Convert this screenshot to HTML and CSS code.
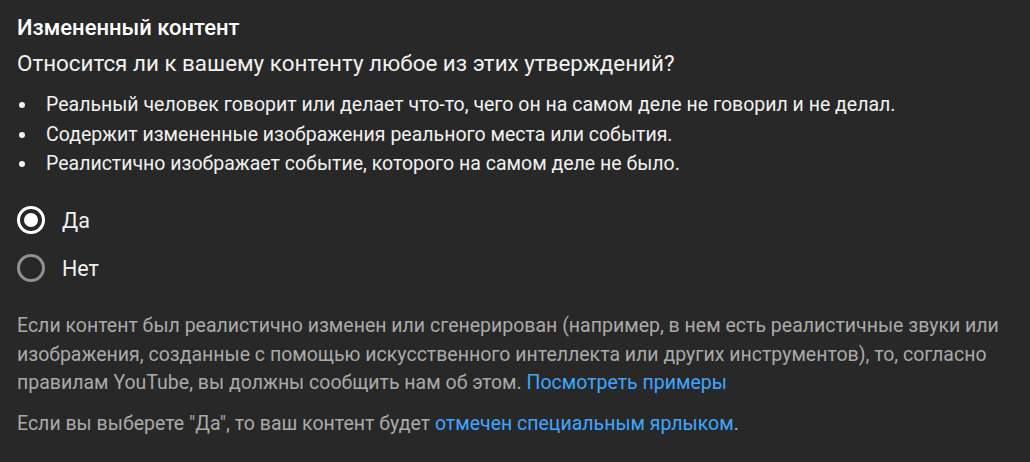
FILE: index.html
```html
<!DOCTYPE html>
<html lang="ru">
<head>
<meta charset="utf-8">
<link rel="stylesheet" href="styles.css">
</head>
<body>
<div class="panel">
  <h2 class="title">Измененный контент</h2>
  <p class="question">Относится ли к вашему контенту любое из этих утверждений?</p>
  <ul class="list">
    <li>Реальный человек говорит или делает что-то, чего он на самом деле не говорил и не делал.</li>
    <li>Содержит измененные изображения реального места или события.</li>
    <li>Реалистично изображает событие, которого на самом деле не было.</li>
  </ul>
  <div class="radios">
    <label class="radio checked"><span class="circle"><span class="dot"></span></span><span class="rlabel">Да</span></label>
    <label class="radio"><span class="circle"></span><span class="rlabel">Нет</span></label>
  </div>
  <p class="note">Если контент был реалистично изменен или сгенерирован (например, в нем есть реалистичные звуки или изображения, созданные с помощью искусственного интеллекта или других инструментов), то, согласно правилам YouTube, вы должны сообщить нам об этом. <a class="link" href="#">Посмотреть примеры</a></p>
  <p class="note note2">Если вы выберете "Да", то ваш контент будет <a class="link" href="#">отмечен специальным ярлыком</a>.</p>
</div>
</body>
</html>
```
FILE: styles.css
```css
html, body {
  margin: 0;
  padding: 0;
  background: #282828;
}
body {
  font-family: Roboto, "Noto Sans", sans-serif;
  color: #f1f1f1;
}
.panel {
  padding: 13px 17px 0 17px;
}
.title {
  margin: 0;
  font-size: 22px;
  font-weight: 500;
  line-height: 30px;
  color: #ffffff;
}
.question {
  margin: 5px 0 0 0;
  font-size: 22.4px;
  line-height: 30px;
  color: #f1f1f1;
}
.list {
  margin: 12px 0 0 0;
  padding: 0;
  list-style: none;
  font-size: 19.5px;
  line-height: 29.5px;
  color: #f1f1f1;
}
.list li {
  display: flex;
  align-items: flex-start;
}
.list li::before {
  content: "";
  flex: 0 0 6px;
  height: 6px;
  margin: 12px 21px 0 2px;
  border-radius: 50%;
  background: #f1f1f1;
}
.radios {
  margin-top: 27.5px;
  display: flex;
  flex-direction: column;
  gap: 20px;
}
.radio {
  display: flex;
  align-items: center;
  gap: 17px;
  height: 28px;
}
.circle {
  box-sizing: border-box;
  width: 28px;
  height: 28px;
  border-radius: 50%;
  border: 3px solid #909090;
  display: flex;
  align-items: center;
  justify-content: center;
}
.checked .circle {
  border-color: #ffffff;
}
.dot {
  width: 14px;
  height: 14px;
  border-radius: 50%;
  background: #ffffff;
}
.rlabel {
  font-size: 21.5px;
  color: #f1f1f1;
}
.note {
  margin: 30px 0 0 0;
  font-size: 19.5px;
  line-height: 28.5px;
  color: #aaaaaa;
}
.note2 {
  margin-top: 12px;
}
.link {
  color: #3ea6ff;
  text-decoration: none;
}
```
